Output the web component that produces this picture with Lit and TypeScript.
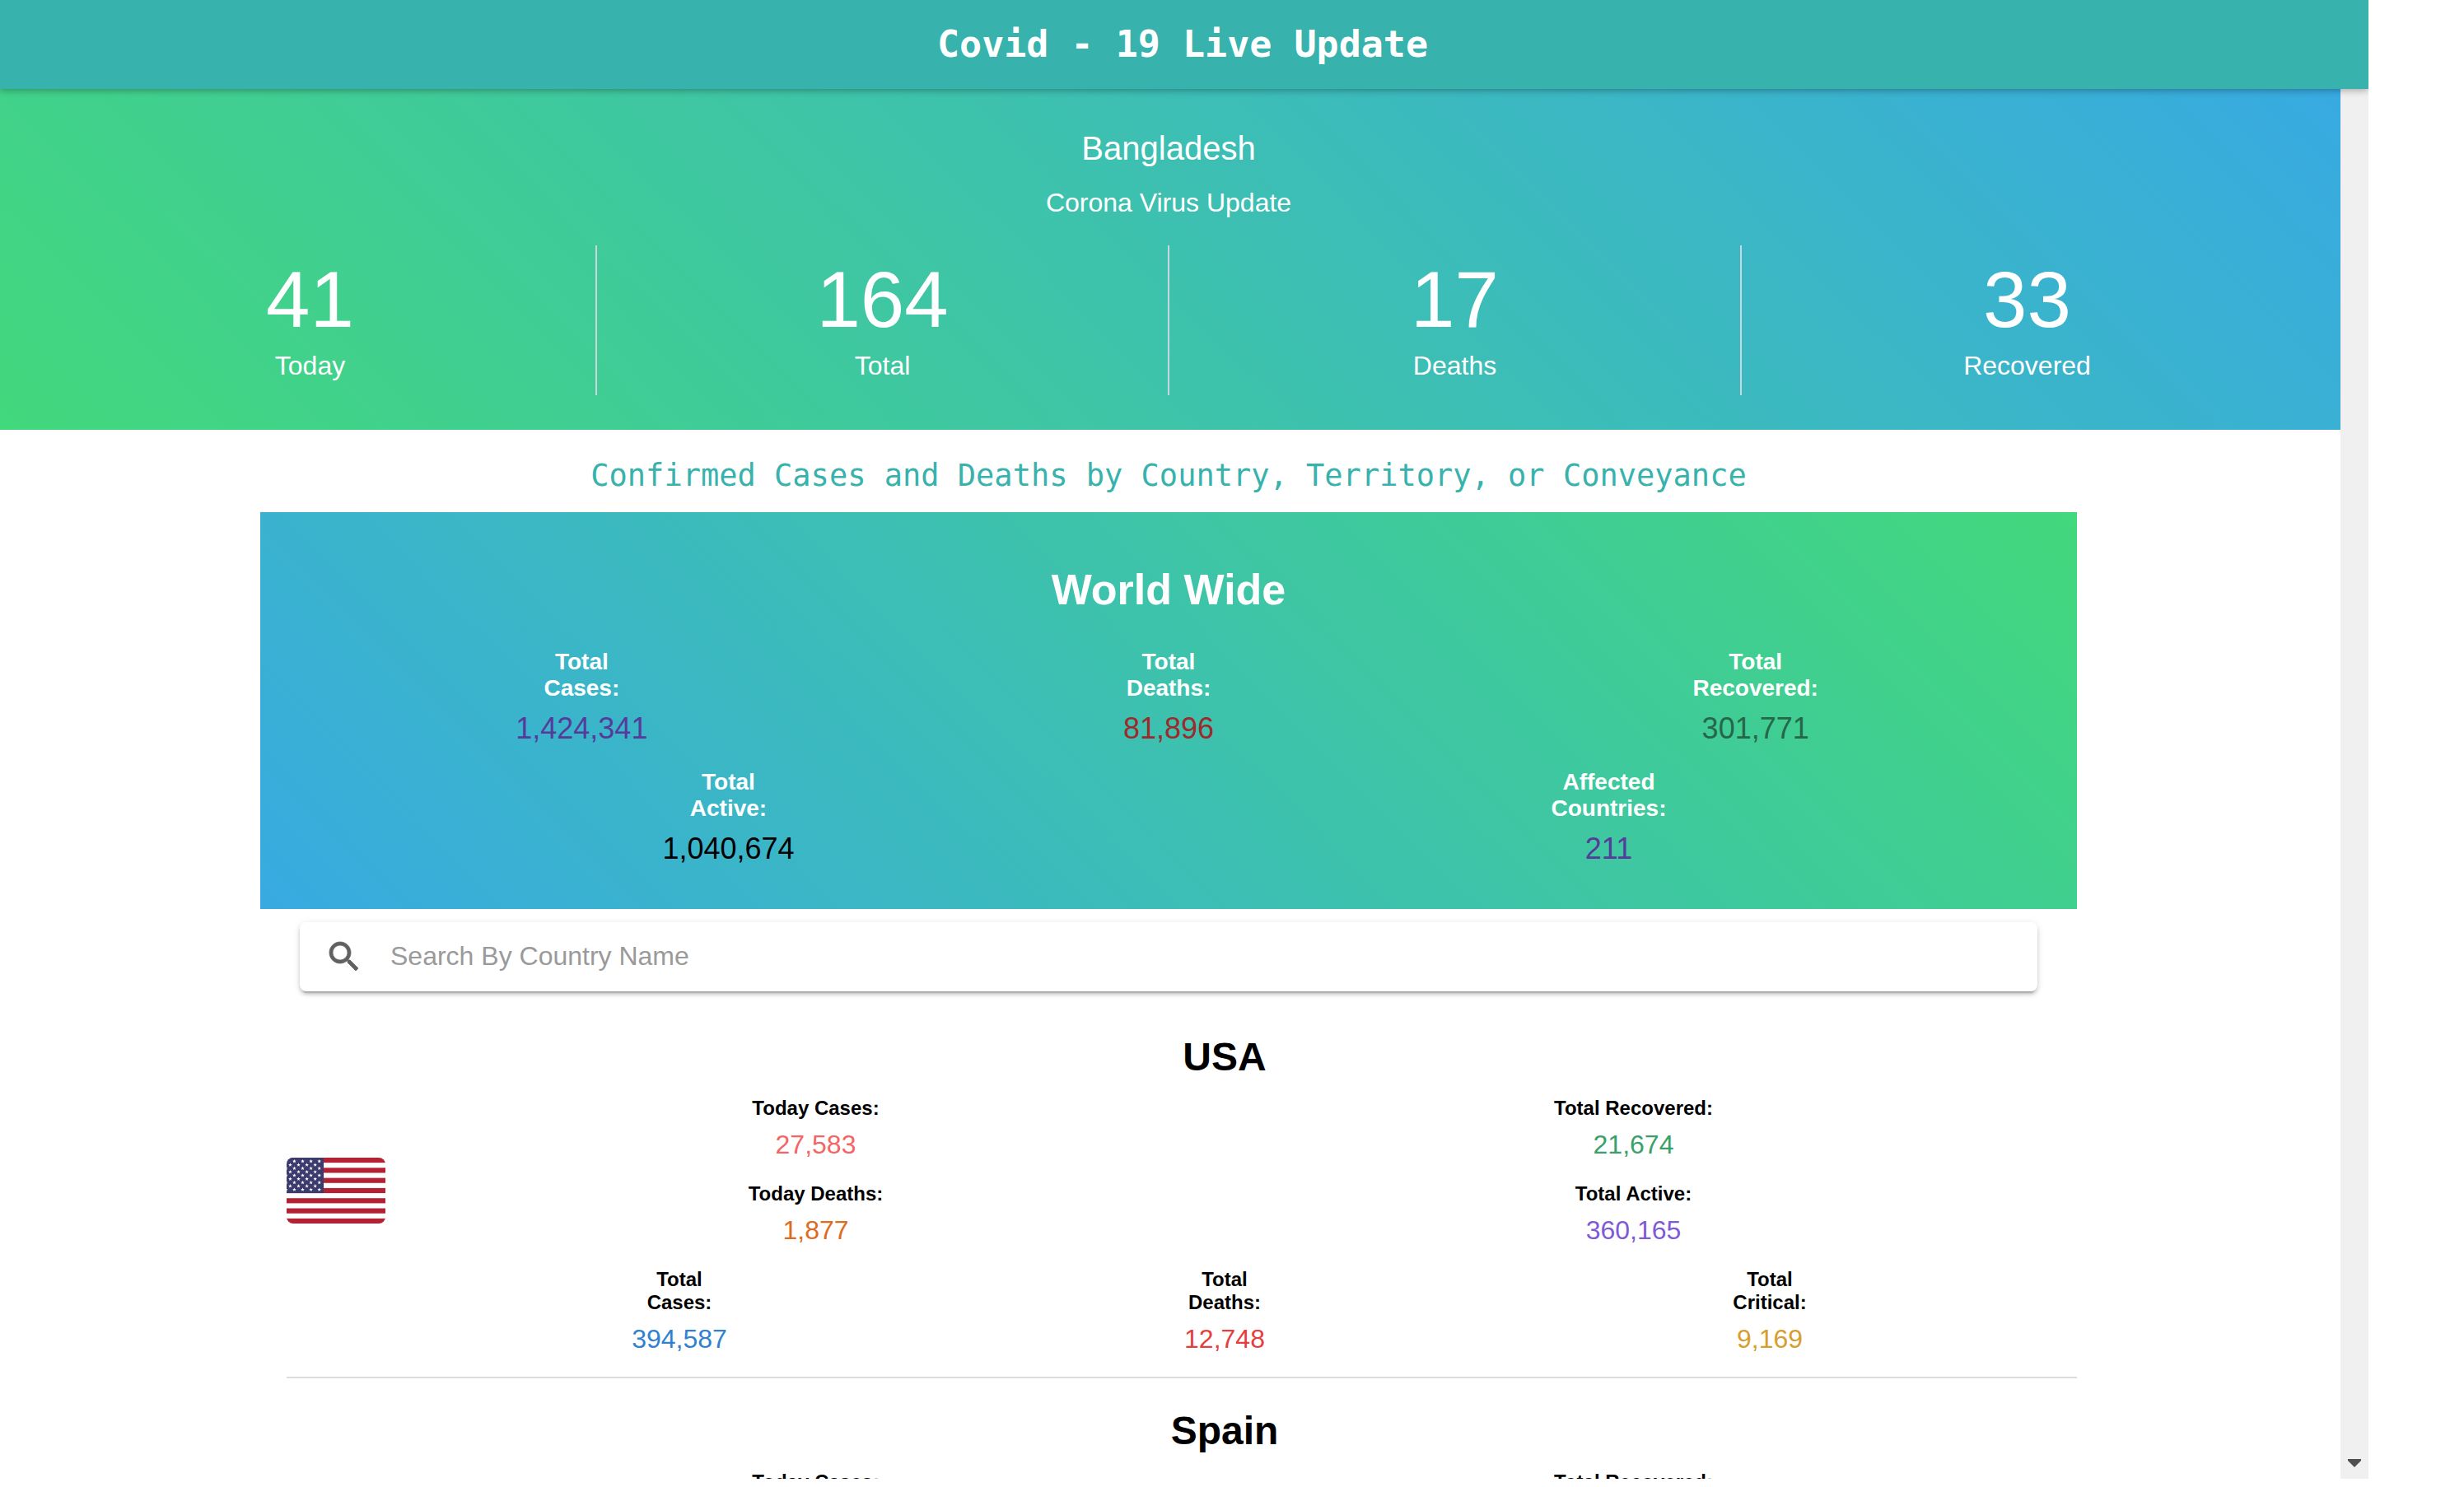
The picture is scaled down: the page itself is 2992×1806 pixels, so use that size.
import { LitElement, html, svg, css, nothing } from "lit";
import { customElement, property } from "lit/decorators.js";
import { classMap } from "lit/directives/class-map.js";

interface Stat {
  label: string;
  value?: string;
  tone?: string;
}

interface Country {
  name: string;
  flag?: "us";
  rows: Stat[][];
}

const LOCAL_STATS: Stat[] = [
  { label: "Today", value: "41" },
  { label: "Total", value: "164" },
  { label: "Deaths", value: "17" },
  { label: "Recovered", value: "33" },
];

const WORLD_ROWS: Stat[][] = [
  [
    { label: "Total\nCases:", value: "1,424,341", tone: "indigo" },
    { label: "Total\nDeaths:", value: "81,896", tone: "maroon" },
    { label: "Total\nRecovered:", value: "301,771", tone: "forest" },
  ],
  [
    { label: "Total\nActive:", value: "1,040,674", tone: "black" },
    { label: "Affected\nCountries:", value: "211", tone: "indigo" },
  ],
];

const COUNTRIES: Country[] = [
  {
    name: "USA",
    flag: "us",
    rows: [
      [
        { label: "Today Cases:", value: "27,583", tone: "coral" },
        { label: "Total Recovered:", value: "21,674", tone: "green" },
      ],
      [
        { label: "Today Deaths:", value: "1,877", tone: "orange" },
        { label: "Total Active:", value: "360,165", tone: "purple" },
      ],
      [
        { label: "Total\nCases:", value: "394,587", tone: "blue" },
        { label: "Total\nDeaths:", value: "12,748", tone: "red" },
        { label: "Total\nCritical:", value: "9,169", tone: "yellow" },
      ],
    ],
  },
  {
    name: "Spain",
    rows: [[{ label: "Today Cases:" }, { label: "Total Recovered:" }]],
  },
];

/* A row of label/value pairs spread over equal columns. */
@customElement("stat-row")
export class StatRow extends LitElement {
  @property({ attribute: false }) stats: Stat[] = [];
  @property() size = "small";

  static styles = css`
    :host {
      display: block;
    }
    .row {
      display: flex;
      margin: 0;
      text-align: center;
    }
    .stat {
      flex: 1 1 0;
    }
    .label {
      font-weight: 700;
      font-size: 24px;
      line-height: 28px;
      white-space: pre-line;
    }
    .value {
      margin: 8px 0 0;
      font-size: 32px;
      line-height: 44px;
    }
    .large .label {
      font-size: 28px;
      line-height: 32px;
    }
    .large .value {
      font-size: 36px;
      line-height: 50px;
    }
    .indigo { color: #553c9a; }
    .maroon { color: #9b2c2c; }
    .forest { color: #276749; }
    .black { color: #000; }
    .coral { color: #f56565; }
    .green { color: #38a169; }
    .orange { color: #dd6b20; }
    .purple { color: #805ad5; }
    .blue { color: #3182ce; }
    .red { color: #e53e3e; }
    .yellow { color: #d69e2e; }
  `;

  render() {
    return html`
      <dl class=${classMap({ row: true, large: this.size === "large" })}>
        ${this.stats.map(
          (s) => html`<div class="stat">
            <dt class="label">${s.label}</dt>
            ${s.value
              ? html`<dd class=${`value ${s.tone ?? ""}`}>${s.value}</dd>`
              : nothing}
          </div>`
        )}
      </dl>
    `;
  }
}

@customElement("flag-us")
export class FlagUs extends LitElement {
  static styles = css`
    :host {
      display: block;
    }
    .flag {
      display: block;
      width: 120px;
      height: 80px;
      border-radius: 8px;
    }
  `;

  private star(cx: number, cy: number) {
    const points = Array.from({ length: 10 }, (_, i) => {
      const r = i % 2 ? 1 : 2.4;
      const a = (Math.PI / 5) * i - Math.PI / 2;
      return `${(cx + r * Math.cos(a)).toFixed(2)},${(cy + r * Math.sin(a)).toFixed(2)}`;
    });
    return svg`<polygon points=${points.join(" ")} fill="#fff"></polygon>`;
  }

  render() {
    const stripe = 80 / 13;
    const stars = Array.from({ length: 9 }, (_, row) =>
      Array.from({ length: row % 2 ? 4 : 5 }, (_, col) =>
        this.star((row % 2 ? 4.4 : -0.7) + col * 10.1, 4.4 + row * 4.3)
      )
    );
    return html`
      <svg class="flag" viewBox="0 0 120 80" role="img" aria-label="USA">
        <rect width="120" height="80" fill="#fff"></rect>
        ${[0, 2, 4, 6, 8, 10, 12].map(
          (i) =>
            svg`<rect y=${i * stripe} width="120" height=${stripe} fill="#b22234"></rect>`
        )}
        <rect width="45" height=${stripe * 7} fill="#3c3b6e"></rect>
        ${stars}
      </svg>
    `;
  }
}

@customElement("app-root")
export class AppRoot extends LitElement {
  static styles = css`
    :host {
      display: block;
      box-sizing: border-box;
      height: 100vh;
      padding: 0 116px 10px 0;
      background: #fff;
      color: #000;
      font-family: "Liberation Sans", Arial, sans-serif;
    }
    h1, h2, h3, p, dl, dd, ul {
      margin: 0;
      padding: 0;
    }
    .frame {
      display: flex;
      flex-direction: column;
      height: 100%;
      overflow: hidden;
    }
    .header {
      flex: none;
      z-index: 1;
      padding: 28px 4px 28px 0;
      background: #38b2ac;
      box-shadow: 0 2px 8px rgba(0, 0, 0, 0.3);
      color: #fff;
      text-align: center;
    }
    .title {
      font: 700 45px/52px "DejaVu Sans Mono", monospace;
    }
    .body {
      display: flex;
      flex: 1;
      min-height: 0;
    }
    .page {
      flex: 1;
      min-width: 0;
      overflow: hidden;
    }
    .scrollbar {
      display: flex;
      flex: none;
      align-items: flex-end;
      justify-content: center;
      width: 34px;
      background: #f0f0f0;
    }
    .arrow {
      width: 16px;
      height: 10px;
      margin-bottom: 14px;
      fill: #505050;
    }
    .hero {
      padding: 48px 34px 42px 30px;
      background: linear-gradient(45deg, #42d87c, #38aae1);
      color: #fff;
      text-align: center;
    }
    .place {
      font-weight: 400;
      font-size: 40px;
      line-height: 48px;
    }
    .tagline {
      margin: 20px 0 30px;
      font-size: 32px;
      line-height: 44px;
    }
    .totals {
      display: flex;
    }
    .total {
      display: flex;
      flex: 1 1 0;
      flex-direction: column-reverse;
      gap: 8px;
      padding: 18px 0 12px;
    }
    .total + .total {
      border-left: 2px solid #cbd5e0;
    }
    .total-label {
      font-size: 32px;
      line-height: 48px;
    }
    .total-value {
      font-size: 96px;
      line-height: 96px;
    }
    .subtitle {
      padding: 26px 4px 14px 0;
      color: #38b2ac;
      font: 400 37px/60px "DejaVu Sans Mono", monospace;
      text-align: center;
    }
    .content {
      padding: 0 320px 0 316px;
    }
    .world {
      display: flex;
      flex-direction: column;
      gap: 24px;
      padding: 64px 34px 48px;
      background: linear-gradient(45deg, #38aae1, #42d87c);
      color: #fff;
    }
    .world-title {
      margin-bottom: 18px;
      font-size: 52px;
      line-height: 60px;
      text-align: center;
    }
    .search {
      display: flex;
      align-items: center;
      gap: 32px;
      height: 84px;
      margin: 16px 48px;
      padding: 0 30px;
      box-sizing: border-box;
      border-radius: 8px;
      background: #fff;
      box-shadow:
        0 6px 2px -4px rgba(0, 0, 0, 0.2),
        0 4px 4px 0 rgba(0, 0, 0, 0.14),
        0 2px 10px 0 rgba(0, 0, 0, 0.12);
    }
    .search-icon {
      flex: none;
      width: 48px;
      height: 48px;
      fill: #616161;
      stroke: #616161;
      stroke-width: 0.4;
    }
    .search-input {
      flex: 1;
      min-width: 0;
      height: 64px;
      padding: 0 0 2px;
      border: 0;
      outline: 0;
      background: none;
      color: #212121;
      font: 400 32px "Liberation Sans", Arial, sans-serif;
    }
    .search-input::placeholder {
      color: #9a9a9a;
      opacity: 1;
    }
    .countries {
      list-style: none;
    }
    .country {
      display: grid;
      grid-template-columns: 120px 1fr;
      align-items: center;
      gap: 26px;
      margin-left: 32px;
      border-bottom: 2px solid #dcdcdc;
    }
    .details {
      display: flex;
      grid-column: 2;
      flex-direction: column;
      gap: 24px;
      padding: 36px 42px 24px 0;
    }
    .country-name {
      margin-bottom: -4px;
      font-size: 48px;
      line-height: 56px;
      text-align: center;
    }
  `;

  render() {
    return html`
      <div class="frame">
        <header class="header">
          <h1 class="title">Covid - 19 Live Update</h1>
        </header>
        <div class="body">
          <main class="page">
            <section class="hero">
              <h2 class="place">Bangladesh</h2>
              <p class="tagline">Corona Virus Update</p>
              <dl class="totals">
                ${LOCAL_STATS.map(
                  (s) => html`<div class="total">
                    <dt class="total-label">${s.label}</dt>
                    <dd class="total-value">${s.value}</dd>
                  </div>`
                )}
              </dl>
            </section>
            <h2 class="subtitle">
              Confirmed Cases and Deaths by Country, Territory, or Conveyance
            </h2>
            <div class="content">
              <section class="world">
                <h2 class="world-title">World Wide</h2>
                ${WORLD_ROWS.map(
                  (row) => html`<stat-row size="large" .stats=${row}></stat-row>`
                )}
              </section>
              <label class="search" for="country-search">
                <svg class="search-icon" viewBox="0 0 24 24" aria-hidden="true">
                  <path
                    d="M15.5 14h-.79l-.28-.27C15.41 12.59 16 11.11 16 9.5 16 5.91 13.09 3 9.5 3S3 5.91 3 9.5 5.91 16 9.5 16c1.61 0 3.09-.59 4.23-1.57l.27.28v.79l5 4.99L20.49 19l-4.99-5zm-6 0C7.01 14 5 11.99 5 9.5S7.01 5 9.5 5 14 7.01 14 9.5 11.99 14 9.5 14z"
                  ></path>
                </svg>
                <input
                  class="search-input"
                  id="country-search"
                  type="text"
                  placeholder="Search By Country Name"
                />
              </label>
              <ul class="countries">
                ${COUNTRIES.map(
                  (c) => html`<li class="country">
                    ${c.flag === "us" ? html`<flag-us></flag-us>` : nothing}
                    <div class="details">
                      <h3 class="country-name">${c.name}</h3>
                      ${c.rows.map(
                        (row) => html`<stat-row .stats=${row}></stat-row>`
                      )}
                    </div>
                  </li>`
                )}
              </ul>
            </div>
          </main>
          <div class="scrollbar" aria-hidden="true">
            <svg class="arrow" viewBox="0 0 16 10">
              <path d="M0 0h16v2L8 10 0 2z"></path>
            </svg>
          </div>
        </div>
      </div>
    `;
  }
}
